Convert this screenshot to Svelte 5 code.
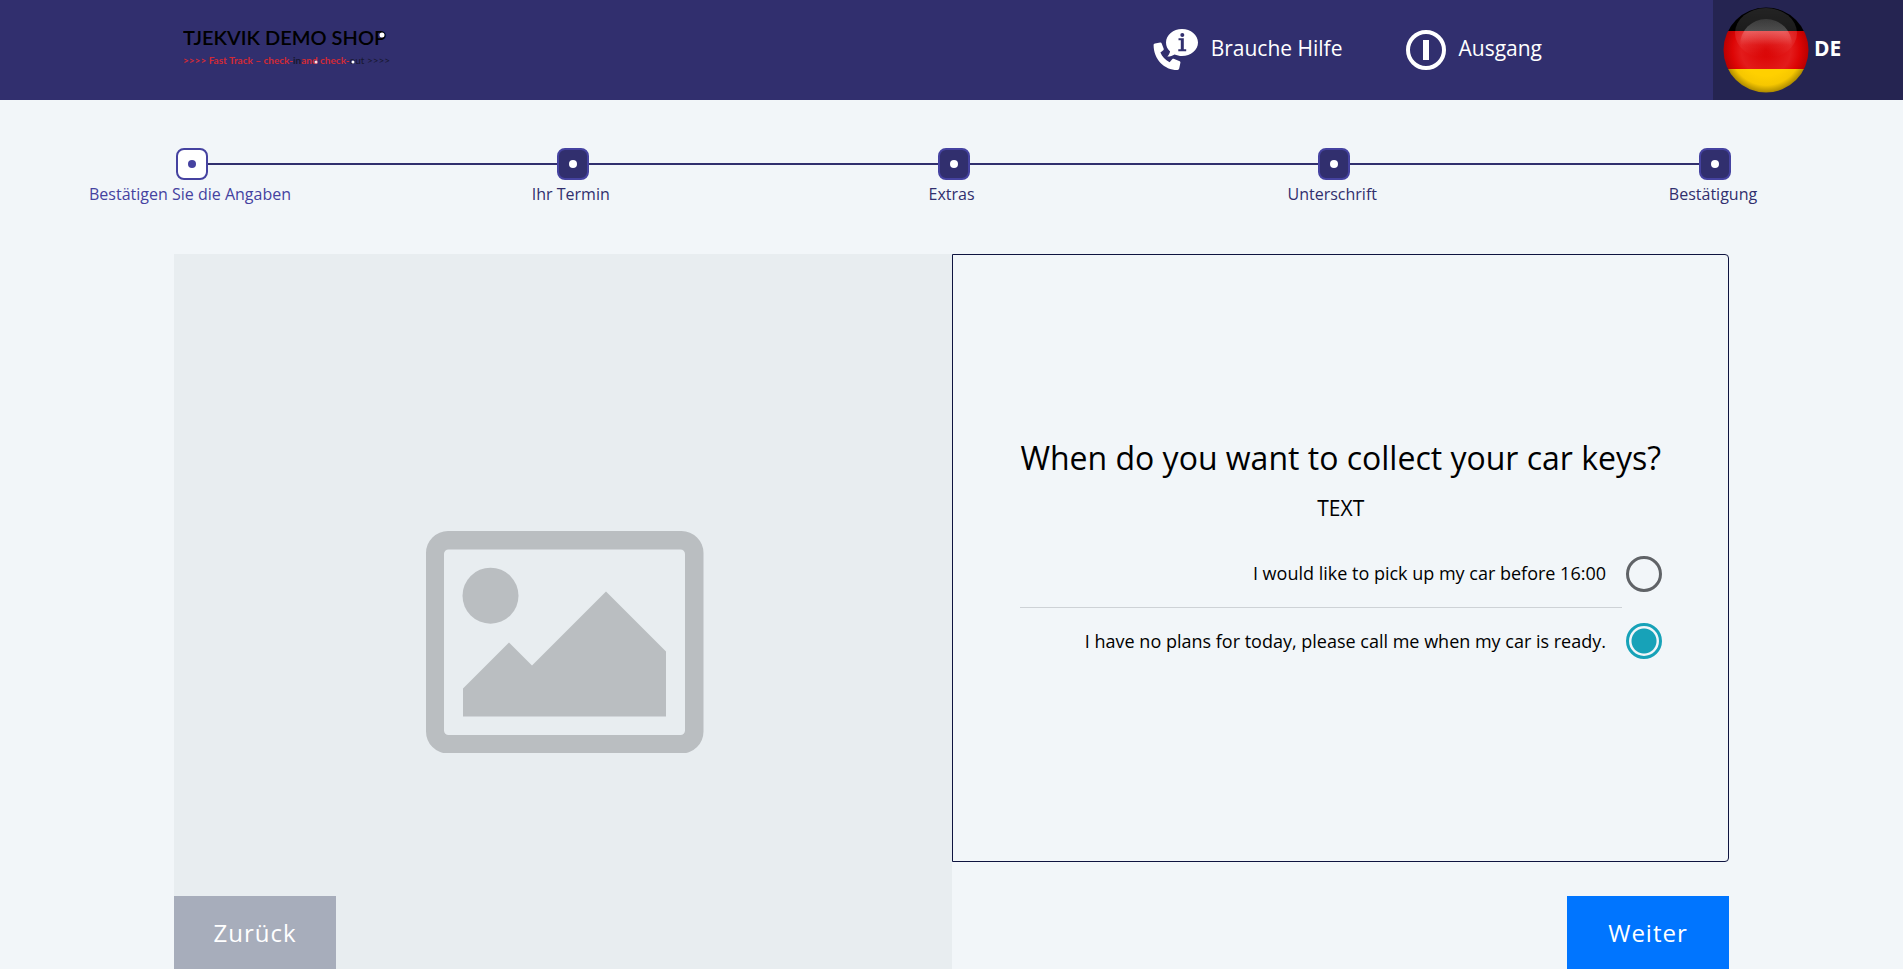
<script>
  const steps = ['Bestätigen Sie die Angaben', 'Ihr Termin', 'Extras', 'Unterschrift', 'Bestätigung'];
  const options = [
    { id: 'before', label: 'I would like to pick up my car before 16:00' },
    { id: 'call', label: 'I have no plans for today, please call me when my car is ready.' }
  ];
  let current = $state(0);
  let choice = $state('call');
</script>

<div class="page">
  <header>
    <a class="logo" href="#home" aria-label="Tjekvik Demo Shop">
      <svg width="216" height="50" viewBox="0 0 216 50">
        <text x="0" y="20" class="logo-name">TJEKVIK DEMO SHOP</text>
        <text x="0" y="39" class="logo-claim"><tspan>&gt;&gt;&gt;&gt; Fast Track – check-</tspan><tspan class="dim">in</tspan><tspan> and check-</tspan><tspan class="dim thin">out &gt;&gt;&gt;&gt;</tspan></text>
        <circle cx="199" cy="10" r="2.5" fill="#fff" />
        <circle cx="133" cy="37" r="1.5" fill="#fbdede" />
        <circle cx="170" cy="37" r="1.5" fill="#fff" />
      </svg>
    </a>
    <nav>
      <a href="#help">
        <svg width="46" height="42" viewBox="0 0 46 42" aria-hidden="true">
          <path fill="#fff" d="M29 0C37.800 0 45 5.900 45 13.500S37.800 27 29 27c-2.700 0-5.200-.6-7.500-1.500-1.700 1.200-4.200 2.100-7.200 2.100 1.400-1.600 2.400-3.200 2.800-5.100C14.400 20.100 13 17 13 13.500 13 5.900 20.200 0 29 0z" />
          <circle cx="29.300" cy="6" r="2" fill="#312f6e" />
          <path fill="#312f6e" d="M25.500 9.300h5.300v10.900h2.400v2h-7.900v-2h2.500v-8.900h-2.300z" />
          <path fill="#fff" d="M2 14.500l5.200-1c.7-.1 1.300.2 1.500.9l2 5.300c.2.600.1 1.100-.4 1.500l-2.900 2.400c1.800 4.200 4.700 7.400 9.200 9.600l2.600-3c.4-.5 1-.6 1.500-.4l6 2.400c.6.300.9.900.7 1.500l-1.200 5.900c-.2.900-.8 1.400-1.700 1.400C11.500 41.200.700 30.300.600 16.200c0-.9.500-1.500 1.400-1.700z" />
        </svg>
        <span>Brauche Hilfe</span>
      </a>
      <a href="#exit">
        <svg width="40" height="40" viewBox="0 0 40 40" aria-hidden="true">
          <circle cx="20" cy="20" r="18" fill="none" stroke="#fff" stroke-width="4" />
          <path fill="#fff" d="M17 10h6v20h-6z" />
        </svg>
        <span>Ausgang</span>
      </a>
    </nav>
    <button class="language" type="button">
      <svg width="86" height="86" viewBox="0 0 86 86" aria-hidden="true">
        <defs>
          <clipPath id="ball"><circle cx="43" cy="43" r="42.500" /></clipPath>
          <radialGradient id="red" cx="43" cy="43" r="43" gradientUnits="userSpaceOnUse">
            <stop offset="0" stop-color="#d90000" />
            <stop offset=".58" stop-color="#e31b1b" />
            <stop offset=".78" stop-color="#dd0505" />
            <stop offset="1" stop-color="#b80000" />
          </radialGradient>
          <radialGradient id="gold" cx="43" cy="43" r="43" gradientUnits="userSpaceOnUse">
            <stop offset=".6" stop-color="#ffd000" />
            <stop offset=".82" stop-color="#f6c700" />
            <stop offset="1" stop-color="#a88600" />
          </radialGradient>
          <linearGradient id="sheen" x1="0" y1="1" x2="0" y2="50" gradientUnits="userSpaceOnUse">
            <stop offset="0" stop-color="#fff" stop-opacity=".14" />
            <stop offset=".6" stop-color="#fff" stop-opacity=".1" />
            <stop offset="1" stop-color="#fff" stop-opacity="0" />
          </linearGradient>
          <linearGradient id="gloss" x1="0" y1="12" x2="0" y2="38" gradientUnits="userSpaceOnUse">
            <stop offset="0" stop-color="#fff" stop-opacity=".12" />
            <stop offset=".45" stop-color="#fff" stop-opacity=".22" />
            <stop offset="1" stop-color="#fff" stop-opacity="0" />
          </linearGradient>
        </defs>
        <g clip-path="url(#ball)">
          <path fill="#000" d="M0 0h86v24H0z" />
          <path fill="url(#red)" d="M0 24h86v39H0z" />
          <path fill="url(#gold)" d="M0 62h86v24H0z" />
          <ellipse cx="43" cy="26" rx="31" ry="25" fill="url(#sheen)" />
          <circle cx="43" cy="38" r="26" fill="url(#gloss)" />
        </g>
      </svg>
      <span>DE</span>
    </button>
  </header>

  <ol class="steps">
    {#each steps as step, i}
      <li class:active={i === current}>
        <button type="button" aria-label={step} onclick={() => (current = i)}><i></i></button>
        <span>{step}</span>
      </li>
    {/each}
  </ol>

  <main>
    <section class="picture">
      <svg width="282" height="222" viewBox="-4 0 282 222" fill="#babec1" aria-hidden="true">
        <path fill-rule="evenodd" d="M22 0h233.500a22 22 0 0 1 22 22v178.500a22 22 0 0 1-22 22H22a22 22 0 0 1-22-22V22A22 22 0 0 1 22 0zM22.500 18.500a4.500 4.500 0 0 0-4.500 4.500v176.500a4.500 4.500 0 0 0 4.500 4.500H254.500a4.500 4.500 0 0 0 4.500-4.500V23a4.500 4.500 0 0 0-4.500-4.500z" />
        <circle cx="64.500" cy="64.700" r="28" />
        <path d="M37 157.500l46-46 23 23 74-74 60 60v65H37z" />
      </svg>
      <button class="action back" type="button">Zurück</button>
    </section>
    <section class="question">
      <form class="card">
        <h1>When do you want to collect your car keys?</h1>
        <p>TEXT</p>
        <div class="options">
          {#each options as option}
            <div class="option">
              <label for={option.id}>{option.label}</label>
              <input type="radio" name="pickup" id={option.id} value={option.id} bind:group={choice} />
            </div>
          {/each}
        </div>
      </form>
      <button class="action next" type="button">Weiter</button>
    </section>
  </main>
</div>

<style>
  :global(body) {
    margin: 0;
    background: #f2f6f9;
  }
  .page {
    display: flex;
    flex-direction: column;
    min-height: 100vh;
    font-family: 'Open Sans', 'Noto Sans', sans-serif;
    color: #000;
  }
  button {
    font-family: inherit;
    border: 0;
    padding: 0;
    cursor: pointer;
  }
  header {
    display: flex;
    align-items: stretch;
    height: 100px;
    background: #312f6e;
  }
  .logo {
    margin: 25px auto 0 183px;
  }
  .logo-name {
    font: 600 20px Lato, sans-serif;
    fill: #000;
  }
  .logo-claim {
    font: 700 10px Lato, sans-serif;
    fill: #d22a35;
  }
  .logo-claim .dim {
    fill: #17172f;
  }
  .thin {
    font-weight: 400;
  }
  nav {
    display: flex;
    align-items: center;
    gap: 64px;
    margin-right: 171px;
  }
  nav a {
    display: flex;
    align-items: center;
    gap: 12px;
    color: #fff;
    font-size: 21px;
    line-height: 28px;
    text-decoration: none;
  }
  nav span,
  .language span {
    padding-bottom: 4px;
  }
  .language {
    display: flex;
    align-items: center;
    gap: 5px;
    width: 190px;
    padding-left: 10px;
    background: #252451;
    color: #fff;
    font-size: 21px;
    font-weight: 700;
    line-height: 28px;
  }
  .steps {
    display: flex;
    justify-content: space-between;
    margin: 48px 172px 48px 176px;
    padding: 0;
    list-style: none;
    background: linear-gradient(#312f6e, #312f6e) 0 15px / 100% 2px no-repeat;
  }
  .steps li {
    display: flex;
    flex-direction: column;
    align-items: center;
    width: 32px;
    color: #312f6e;
  }
  .steps button {
    display: grid;
    place-items: center;
    box-sizing: border-box;
    width: 32px;
    height: 32px;
    border: 2px solid #4542a0;
    border-radius: 8px;
    background: #312f6e;
  }
  .steps i {
    width: 8px;
    height: 8px;
    border-radius: 50%;
    background: #fff;
  }
  .steps span {
    padding: 2px 4px 0 0;
    font-size: 16px;
    line-height: 24px;
    white-space: nowrap;
  }
  .steps .active {
    color: #4542a0;
  }
  .steps .active button {
    background: #fff;
  }
  .steps .active i {
    background: #4542a0;
  }
  main {
    flex: 1;
    display: grid;
    grid-template-columns: 1fr 1fr;
    margin: 0 174px;
  }
  .picture,
  .question {
    display: flex;
    flex-direction: column;
    align-items: center;
  }
  .picture {
    padding-top: 277px;
    background: #e8edf0;
  }
  .card {
    flex: 1;
    display: flex;
    flex-direction: column;
    justify-content: center;
    align-self: stretch;
    box-sizing: border-box;
    margin-bottom: 34px;
    padding: 0 66px 4px 67px;
    border: 1px solid #0f1440;
    border-radius: 0 4px 4px 0;
    text-align: center;
  }
  h1 {
    margin: 0;
    font-size: 32px;
    font-weight: 400;
    line-height: 40px;
  }
  p {
    margin: 16px 0 18px;
    font-size: 21px;
    line-height: 28px;
  }
  .options {
    text-align: right;
  }
  .option {
    display: grid;
    grid-template-columns: 1fr 36px;
    align-items: center;
    column-gap: 4px;
  }
  .option label {
    padding: 20px 16px;
    font-size: 18px;
    line-height: 27px;
  }
  .option:first-child label {
    border-bottom: 1px solid #ced2d6;
  }
  input {
    appearance: none;
    width: 36px;
    height: 36px;
    margin: 0;
    border: 3px solid #606367;
    border-radius: 50%;
  }
  input:checked {
    border-color: #17a2b8;
    background: radial-gradient(circle, #17a2b8 12px, #f2f6f9 13px);
  }
  .action {
    min-width: 162px;
    height: 73px;
    color: #fff;
    font-size: 24px;
    letter-spacing: 1px;
  }
  .back {
    align-self: flex-start;
    margin-top: auto;
    background: #a7adbb;
  }
  .next {
    align-self: flex-end;
    background: #0075ff;
  }
</style>
